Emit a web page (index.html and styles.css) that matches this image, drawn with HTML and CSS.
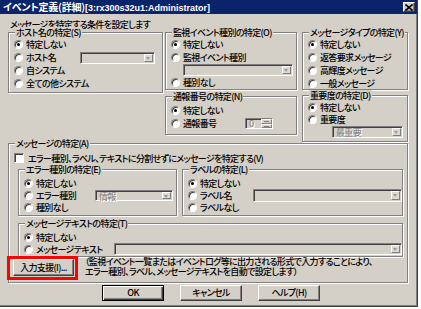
FILE: index.html
```html
<!DOCTYPE html>
<html lang="ja">
<head>
<meta charset="utf-8">
<title>イベント定義(詳細)</title>
<link rel="stylesheet" href="styles.css">
</head>
<body>
<div class="window">
  <div class="titlebar">
    <span class="title"><span class="jp">イベント定義(詳細)</span>[3:rx300s32u1:Administrator]</span>
    <span class="close"><svg width="8" height="7" viewBox="0 0 8 7"><path d="M0.5 0.5 L7.5 6.5 M7.5 0.5 L0.5 6.5" stroke="#000" stroke-width="1.6" fill="none"/></svg></span>
  </div>
  <div class="client">
    <div class="intro">メッセージを特定する条件を設定します</div>
    <div class="top">
      <fieldset class="grp host">
        <legend>ホスト名の特定(S)</legend>
        <div class="row"><span class="radio on"></span>特定しない</div>
        <div class="row"><span class="radio"></span>ホスト名<span class="combo host-combo"><span class="drop"></span></span></div>
        <div class="row"><span class="radio"></span>自システム</div>
        <div class="row"><span class="radio"></span>全ての他システム</div>
      </fieldset>
      <div class="col mid">
        <fieldset class="grp monitor">
          <legend>監視イベント種別の特定(O)</legend>
          <div class="row"><span class="radio on"></span>特定しない</div>
          <div class="row r12"><span class="radio"></span>監視イベント種別</div>
          <div class="row"><span class="combo mon-combo"><span class="drop"></span></span></div>
          <div class="row"><span class="radio"></span>種別なし</div>
        </fieldset>
        <fieldset class="grp notify">
          <legend>通報番号の特定(N)</legend>
          <div class="row first"><span class="radio on"></span>特定しない</div>
          <div class="row"><span class="radio"></span>通報番号<span class="spin"><span class="spin-val">0</span><span class="spin-btns"><span class="sb up"></span><span class="sb dn"></span></span></span></div>
        </fieldset>
      </div>
      <div class="col right">
        <fieldset class="grp mtype">
          <legend>メッセージタイプの特定(Y)</legend>
          <div class="row"><span class="radio on"></span>特定しない</div>
          <div class="row"><span class="radio"></span>返答要求メッセージ</div>
          <div class="row"><span class="radio"></span>高輝度メッセージ</div>
          <div class="row"><span class="radio"></span>一般メッセージ</div>
        </fieldset>
        <fieldset class="grp sev">
          <legend>重要度の特定(D)</legend>
          <div class="row r12"><span class="radio on"></span>特定しない</div>
          <div class="row r12"><span class="radio"></span>重要度</div>
          <div class="row"><span class="combo sev-combo"><span class="combo-text">最重要</span><span class="drop"></span></span></div>
        </fieldset>
      </div>
    </div>
    <fieldset class="grp msg">
      <legend>メッセージの特定(A)</legend>
      <div class="row check-row"><span class="check"></span>エラー種別、ラベル、テキストに分割せずにメッセージを特定する(V)</div>
      <div class="sub">
        <fieldset class="grp err">
          <legend>エラー種別の特定(E)</legend>
          <div class="row r12 first"><span class="radio on"></span>特定しない</div>
          <div class="row r12"><span class="radio"></span>エラー種別<span class="combo err-combo"><span class="combo-text">情報</span><span class="drop"></span></span></div>
          <div class="row r12"><span class="radio"></span>種別なし</div>
        </fieldset>
        <fieldset class="grp lbl">
          <legend>ラベルの特定(L)</legend>
          <div class="row r12 first"><span class="radio on"></span>特定しない</div>
          <div class="row r12"><span class="radio"></span>ラベル名<span class="combo lbl-combo"><span class="drop"></span></span></div>
          <div class="row r12"><span class="radio"></span>ラベルなし</div>
        </fieldset>
      </div>
      <fieldset class="grp txt">
        <legend>メッセージテキストの特定(T)</legend>
        <div class="row r12 first"><span class="radio on"></span>特定しない</div>
        <div class="row r12"><span class="radio"></span>メッセージテキスト<span class="combo txt-combo"><span class="drop"></span></span></div>
      </fieldset>
      <div class="assist">
        <span class="mark"><button class="btn assist-btn">入力支援(I)...</button></span>
        <div class="note">（監視イベント一覧またはイベントログ等に出力される形式で入力することにより、<br>エラー種別、ラベル、メッセージテキストを自動で設定します）</div>
      </div>
    </fieldset>
    <div class="buttons">
      <button class="btn default">OK</button>
      <button class="btn">キャンセル</button>
      <button class="btn">ヘルプ(H)</button>
    </div>
  </div>
</div>
</body>
</html>
```

FILE: styles.css
```css
* { box-sizing: border-box; }
html, body { margin: 0; padding: 0; background: #fff; }
body {
  font-family: "Noto Sans CJK JP", sans-serif;
  font-size: 9px;
  font-weight: 500;
  line-height: 11px;
  letter-spacing: -0.65px;
  color: #000;
  font-feature-settings: "palt";
}
.window {
  width: 418px;
  height: 307px;
  background: #d4d0c8;
  border-right: 1px solid #404040;
  border-bottom: 1px solid #404040;
  box-shadow: inset -1px -1px #808080;
  display: flex;
  flex-direction: column;
  overflow: hidden;
}
.titlebar {
  flex: none;
  height: 14px;
  background: #0a246a;
  color: #fff;
  display: flex;
  align-items: center;
  justify-content: space-between;
  padding: 0 2px 0 3px;
}
.title {
  font-family: "Liberation Sans", "Noto Sans CJK JP", sans-serif;
  font-weight: bold;
  font-size: 9px;
  letter-spacing: 0;
  white-space: nowrap;
}
.title .jp {
  font-family: "Noto Sans CJK JP", sans-serif;
  font-size: 10px;
  letter-spacing: -0.2px;
}
.close {
  width: 12px;
  height: 10px;
  background: #d4d0c8;
  border: 1px solid;
  border-color: #fff #404040 #404040 #fff;
  box-shadow: inset -1px -1px #808080;
  display: flex;
  align-items: center;
  justify-content: center;
}
.close svg { display: block; }
.client {
  flex: 1;
  padding: 0 0 0 8px;
  display: flex;
  flex-direction: column;
}
.intro { padding-top: 6px; line-height: 10px; margin-left: 2px; white-space: nowrap; }
.top { display: flex; align-items: flex-start; margin-top: -3px; }
.col { display: flex; flex-direction: column; }
.mid { width: 132px; margin-left: 2px; }
.right { width: 106px; margin-left: 5px; }

.grp {
  margin: 0;
  padding: 0 3px 0 5px;
  border: 1px solid #808080;
  box-shadow: inset 1px 1px #fff, 1px 1px #fff;
  min-width: 0;
}
.grp > legend {
  padding: 0 1px;
  margin-left: 1px;
  line-height: 11px;
  background: #d4d0c8;
  white-space: nowrap;
}
.row { display: flex; align-items: center; height: 13px; white-space: nowrap; }
.row.r12 { height: 12px; }

.radio {
  flex: none;
  position: relative;
  width: 9px;
  height: 9px;
  margin-right: 3px;
  border-radius: 50%;
  background: #fff;
  border: 1px solid;
  border-color: #808080 #fff #fff #808080;
  box-shadow: inset 1px 1px 0 #404040;
}
.radio.on::after {
  content: "";
  position: absolute;
  left: 2px;
  top: 2px;
  width: 3px;
  height: 3px;
  border-radius: 50%;
  background: #000;
}
.check {
  flex: none;
  width: 10px;
  height: 10px;
  margin-right: 4px;
  background: #fff;
  border: 1px solid;
  border-color: #808080 #fff #fff #808080;
  box-shadow: inset 1px 1px 0 #404040;
}
.combo {
  flex: none;
  display: flex;
  align-items: stretch;
  height: 12px;
  padding: 1px;
  background: #d4d0c8;
  border: 1px solid;
  border-color: #808080 #fff #fff #808080;
  box-shadow: inset 1px 1px #404040;
}
.combo-text {
  flex: 1;
  color: #8a8a8a;
  text-shadow: 1px 1px 0 #fff;
  line-height: 9px;
  padding-left: 2px;
}
.drop {
  margin-left: auto;
  flex: none;
  position: relative;
  width: 9px;
  background: #dcd9d2;
  border: 1px solid;
  border-color: #fff #808080 #808080 #fff;
}
.drop::after {
  content: "";
  position: absolute;
  left: 1px;
  top: 2px;
  border-top: 3px solid #9a9a9a;
  border-left: 2.5px solid transparent;
  border-right: 2.5px solid transparent;
}

/* host */
.host { width: 155px; height: 66px; }
.host-combo { width: 75px; margin-left: auto; margin-right: 4px; }

/* monitor */
.monitor { height: 63px; }
.mon-combo { width: 110px; margin-left: 12px; margin-top: 1px; }
.notify { height: 44px; margin-top: 1px; }
.notify .first { margin-top: 2px; }
.spin {
  margin-left: auto;
  margin-right: 20px;
  width: 28px;
  height: 11px;
  display: flex;
  background: #d4d0c8;
  border: 1px solid;
  border-color: #808080 #fff #fff #808080;
  box-shadow: inset 1px 1px #404040;
}
.spin-val {
  flex: 1;
  color: #8a8a8a;
  text-shadow: 1px 1px 0 #fff;
  line-height: 9px;
  padding-left: 3px;
}
.spin-btns { width: 11px; display: flex; flex-direction: column; }
.sb {
  flex: 1;
  position: relative;
  background: #d4d0c8;
  border: 1px solid;
  border-color: #fff #808080 #808080 #fff;
}
.sb::after {
  content: "";
  position: absolute;
  left: 2px;
  top: 1px;
  width: 5px;
  height: 1px;
  background: #808080;
}

/* right column */
.mtype { height: 63px; }
.sev { height: 52px; }
.sev-combo { width: 71px; margin-left: 24px; margin-top: 1px; }

/* message group */
.msg {
  width: 400px;
  height: 145px;
  margin-top: -4px;
}
.check-row { height: 12px; margin-top: 3px; }
.sub { display: flex; margin-left: 4px; }
.err { width: 159px; height: 52px; }
.lbl { width: 221px; height: 52px; margin-left: 5px; }
.err .first, .lbl .first, .txt .first { margin-top: 2px; }
.err-combo { width: 78px; margin-left: auto; margin-right: 0px; height: 11px; }
.lbl-combo { width: 149px; margin-left: auto; margin-right: -3px; height: 13px; }
.txt { width: 385px; height: 39px; margin-left: 4px; margin-top: 2px; }
.txt-combo { width: 288px; margin-left: auto; margin-right: -3px; }

.assist { display: flex; align-items: flex-start; margin-top: 2px; margin-left: -1px; }
.mark { position: relative; display: flex; flex: none; }
.mark::after {
  content: "";
  position: absolute;
  left: -6px;
  right: -4px;
  top: -3px;
  bottom: -4px;
  border: 3px solid #ff0000;
}
.note { margin-left: 11px; margin-top: -2px; line-height: 10px; white-space: nowrap; }

.btn {
  font: inherit;
  font-feature-settings: "palt";
  letter-spacing: -0.65px;
  height: 16px;
  width: 62px;
  padding: 0;
  color: #000;
  background: #d4d0c8;
  border: 1px solid;
  border-color: #fff #404040 #404040 #fff;
  box-shadow: inset -1px -1px #808080;
  line-height: 12px;
}
.assist-btn { width: 61px; height: 17px; }
.btn.default {
  border: 1px solid #000;
  box-shadow: inset 1px 1px #fff, inset -1px -1px #404040, inset -2px -2px #808080;
}
.buttons {
  display: flex;
  gap: 16px;
  margin-top: 2px;
  margin-left: 94px;
}
```
